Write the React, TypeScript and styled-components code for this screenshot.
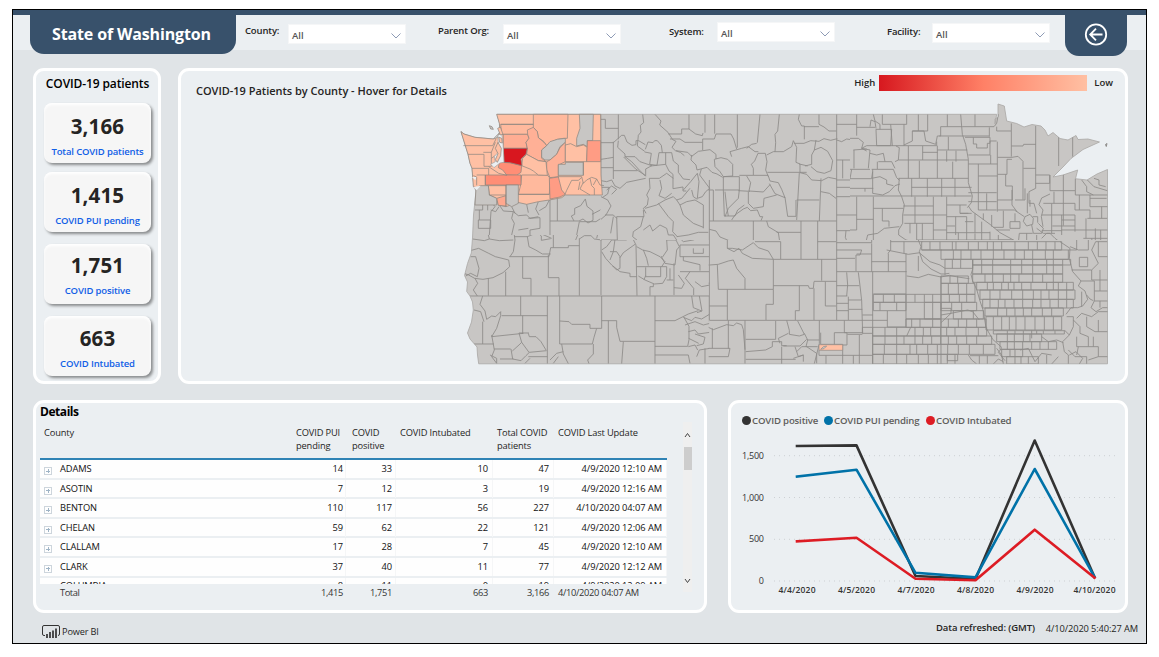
import React from "react";
import styled, { createGlobalStyle } from "styled-components";

const Global = createGlobalStyle`
  *, *::before, *::after { box-sizing: border-box; }
  body { margin: 0; background: #fff; font-family: "Open Sans", "Noto Sans", sans-serif; color: #252423; }
`;

const Page = styled.div`
  width: 1159px;
  height: 657px;
  padding: 9px 12px;
  overflow: hidden;
`;

const Frame = styled.main`
  width: 1135px;
  height: 635px;
  border: 1px solid #000;
  background: #e0e4e7;
`;

const Header = styled.header`
  height: 40px;
  display: flex;
  align-items: flex-start;
  padding-left: 17px;
  background: linear-gradient(#38516b 5px, #ebeff2 5px);
`;

const TitleTab = styled.h1`
  width: 206px;
  height: 44px;
  margin: 0;
  padding: 4px 3px 0 0;
  display: flex;
  align-items: center;
  justify-content: center;
  border-radius: 0 0 14px 14px;
  background: #38516b;
  color: #fff;
  font-size: 16px;
  font-weight: 700;
  letter-spacing: -0.15px;
`;

const BackTab = styled.button`
  width: 62px;
  height: 46px;
  margin: 0 0 0 15px;
  padding: 3px 0 0;
  border: 0;
  border-radius: 0 0 14px 14px;
  background: #38516b;
  display: flex;
  align-items: center;
  justify-content: center;
`;

const Filter = styled.label<{ $left: number; $top: number; $width: number; $labelTop: number }>`
  margin-left: ${(p) => p.$left}px;
  padding-top: ${(p) => p.$top}px;
  width: ${(p) => p.$width}px;
  display: flex;
  justify-content: space-between;
  align-items: flex-start;
  flex: none;
  > span {
    margin-top: ${(p) => p.$labelTop}px;
    font-size: 9.5px;
    line-height: 13px;
    font-weight: 600;
    letter-spacing: -0.15px;
    white-space: nowrap;
    color: #252423;
  }
`;

const Dropdown = styled.div`
  width: 118px;
  height: 20px;
  padding: 3px 4px 0 3px;
  border: 1px solid #f5f6f7;
  background: #fff;
  display: flex;
  justify-content: space-between;
  align-items: center;
  font-size: 9.5px;
  font-weight: 600;
  color: #555;
`;

const TopRow = styled.section`
  margin-top: 18px;
  padding-left: 20px;
  height: 316px;
  display: flex;
  gap: 17px;
`;

const BottomRow = styled.section`
  margin-top: 16px;
  padding-left: 20px;
  height: 213px;
  display: flex;
  gap: 21px;
`;

const Panel = styled.div<{ $width: number }>`
  width: ${(p) => p.$width}px;
  flex: none;
  border: 3px solid #fff;
  border-radius: 11px;
  background: #ebeff2;
`;

const StatsPanel = styled(Panel)`
  padding: 4px 7px 0 8px;
`;

const StatsTitle = styled.h2`
  margin: 0 0 11px 0;
  height: 17px;
  line-height: 17px;
  text-align: center;
  font-size: 12px;
  font-weight: 600;
  letter-spacing: -0.12px;
  white-space: nowrap;
  color: #000;
`;

const StatCard = styled.div<{ $gap: number; $top: number }>`
  width: 107px;
  height: 60px;
  margin-bottom: ${(p) => p.$gap}px;
  padding-top: ${(p) => p.$top}px;
  border-radius: 8px;
  background: #f6f6f6;
  box-shadow: 2px 2px 3px rgba(0, 0, 0, 0.42), inset 0 2px 3px #fff;
  text-align: center;
`;

const StatValue = styled.div`
  height: 30px;
  line-height: 28px;
  font-size: 20.5px;
  font-weight: 700;
  letter-spacing: 0.15px;
  color: #252423;
`;

const StatLabel = styled.div`
  height: 20px;
  line-height: 20px;
  font-size: 9.5px;
  font-weight: 600;
  white-space: nowrap;
  letter-spacing: -0.15px;
  color: #1160e6;
`;

const MapHeader = styled.div`
  height: 29px;
  padding: 4px 12px 0 15px;
  display: flex;
  align-items: flex-start;
  font-size: 9.5px;
  line-height: 16px;
  font-weight: 600;
`;

const MapTitle = styled.h2`
  margin: 8px auto 0 0;
  font-size: 11px;
  line-height: 16px;
  font-weight: 600;
  letter-spacing: -0.02px;
`;

const Scale = styled.div`
  width: 208px;
  height: 16px;
  margin: 0 7px 0 4px;
  background: linear-gradient(90deg, #d7181f, #ff8066 50%, #ffc0a3);
`;

const MapCanvas = styled.svg`
  display: block;
  margin-left: 275px;
`;

const DetailsPanel = styled(Panel)`
  display: flex;
  padding: 0 0 0 4px;
`;

const TableArea = styled.div`
  width: 627px;
`;

const DetailsTitle = styled.h2`
  margin: 0;
  height: 19px;
  line-height: 17px;
  font-size: 12px;
  font-weight: 700;
  letter-spacing: -0.45px;
  color: #000;
`;

const COLS = "252px 54px 50px 97px 61px 113px";

const HeadRow = styled.div`
  height: 37px;
  display: grid;
  grid-template-columns: ${COLS};
  font-size: 9.3px;
  line-height: 13px;
  letter-spacing: -0.15px;
  padding-top: 4px;
  > span { padding-left: 4px; white-space: pre; }
  > span:nth-child(3) { padding-left: 6px; }
`;

const Rows = styled.div`
  height: 124px;
  overflow: hidden;
`;

const NameCell = styled.span<{ $indent: number }>`
  display: flex;
  align-items: center;
  gap: 8px;
  padding-left: ${(p) => p.$indent}px;
  letter-spacing: -0.1px;
`;

const Row = styled.div`
  height: 17.6px;
  margin-bottom: 2px;
  display: grid;
  grid-template-columns: ${COLS};
  background: #fefefe;
  font-size: 9.3px;
  line-height: 18px;
  color: #111;
  ${Rows} > &:last-child { line-height: 16px; }
`;

const Cell = styled.span<{ $inset: number; $start?: boolean }>`
  text-align: ${(p) => (p.$start ? "left" : "right")};
  padding: 0 ${(p) => p.$inset}px;
  border-right: 1px solid #f5f6f7;
  letter-spacing: -0.06px;
  white-space: nowrap;
`;

const Expander = styled.i`
  width: 8px;
  height: 8px;
  margin-top: 4px;
  border: 1px solid #cdd5dc;
  background:
    linear-gradient(#9fb4c6, #9fb4c6) center / 4px 1px no-repeat,
    linear-gradient(#9fb4c6, #9fb4c6) center / 1px 4px no-repeat;
`;

const Rule = styled.div`
  height: 2px;
  margin-top: -1px;
  background: #2f83b5;
`;

const TotalRow = styled(Row)`
  background: none;
  color: #333;
  ${Cell} { border-color: transparent; letter-spacing: -0.33px; }
  ${NameCell} { letter-spacing: -0.45px; }
`;

const Scroller = styled.div`
  width: 9px;
  height: 170px;
  margin: 19px 0 0 16px;
  background: #efefef;
  display: flex;
  flex-direction: column;
  align-items: center;
`;

const Thumb = styled.div`
  width: 8px;
  height: 23px;
  margin: 6px 0 auto;
  background: #cdcdcd;
`;

const ChartPanel = styled(Panel)`
  padding: 9px 0 0 11px;
`;

const Legend = styled.div`
  display: flex;
  height: 17px;
  padding-bottom: 1px;
  align-items: center;
  font-size: 9.6px;
  font-weight: 600;
  color: #605e5c;
`;

const Dot = styled.i<{ $color: string }>`
  width: 9px;
  height: 9px;
  margin-right: 1px;
  border-radius: 50%;
  background: ${(p) => p.$color};
`;

const LegendItem = styled.span<{ $width: number }>`
  width: ${(p) => p.$width}px;
  display: flex;
  align-items: center;
  white-space: nowrap;
  letter-spacing: -0.16px;
`;

const ChartCanvas = styled.svg`
  display: block;
  margin-left: -11px;
`;

const Footer = styled.footer`
  height: 30px;
  padding: 0 8px 0 29px;
  display: flex;
  align-items: center;
  font-size: 9.3px;
  letter-spacing: -0.12px;
  > svg { margin-top: 7px; }
`;

const Brand = styled.span`
  margin: 7px auto 0 2px;
  font-size: 9.2px;
  letter-spacing: -0.15px;
`;

const Refreshed = styled.b`
  font-weight: 600;
  font-size: 9.5px;
  margin: -2px 11px 0 0;
  letter-spacing: -0.1px;
`;

/* ---------- map data ---------- */

type Shape = [string, string];
const LIGHT = "#ffc0a4";
const LAND = "#c8c6c4";

const washington: Shape[] = [
  [LIGHT, "140,58 452,58 453,240 457,300 346,300 335,308 298,315 265,320 230,328 203,322 168,335 145,330 140,310 118,300 115,272 80,278 70,275 66,220 60,205 54,178 33,110 42,117 75,127 130,132 142,128 150,110 148,85"],
  ["#ffb99d", "152,88 250,88 257,98 233,118 155,118"],
  ["#ffad93", "160,118 233,118 237,130 228,142 232,160 160,160"],
  ["#ffb99d", "250,58 354,58 352,130 340,130 322,133 305,140 290,152 282,140 265,128 262,110 250,97"],
  ["#ffb096", "233,118 232,105 250,97 262,110 265,128 282,142 290,152 275,165 275,190 288,200 265,197 230,178 232,160 228,142 237,130"],
  [LAND, "275,165 290,152 300,140 322,133 346,130 346,142 330,155 320,178 300,195 285,195 275,187"],
  ["#ffb197", "290,200 300,195 320,178 330,158 346,142 346,200 325,210 325,245 300,248 290,225"],
  ["#ffb99d", "215,240 292,240 300,250 298,298 205,298 212,270"],
  [LIGHT, "230,178 265,197 288,200 292,241 265,240 250,228 240,222 215,212 218,190"],
  [LAND, "388,58 430,58 428,137 412,137 412,155 400,148 380,153 380,130 390,100"],
  [LIGHT, "346,150 362,146 380,155 400,150 412,157 410,200 346,200"],
  ["#ff9c84", "412,137 452,137 452,200 410,200"],
  [LAND, "346,202 400,202 400,241 325,241 325,208 346,208"],
  ["#ff9c84", "298,250 325,246 330,265 335,285 346,298 330,306 300,312"],
  ["#ff8e76", "148,202 180,203 215,212 213,232 200,241 170,240 158,225 145,218"],
  ["#ff8e76", "106,240 213,240 213,270 106,270"],
  ["#ffa88e", "140,310 168,302 168,333 145,331"],
  [LAND, "168,270 205,270 205,325 185,335 168,325"],
  [LAND, "78,280 90,272 115,272 118,300 140,310 140,330 75,330"],
  ["#d8171f", "160,160 232,160 228,178 213,192 216,212 180,203 162,202"],
];

const coasts = "M40 152h88 l10 -20 M54 178h48 v36 h22 v-42 h-24 M124 172l12 -30 M124 190l15 -10 M66 220h50 v20 M116 215l30 20 25 6 M80 240h26 v30 M70 242l10 4 0 25 M115 272h54 M168 270v65 M118 300h50 M400 241l0 -41 M325 245h70 l5 20 10 -10 15 -8 15 5 10 18 12 2 M395 248l-10 8 -20 0 -15 30 -5 12 M385 285l5 -25 M400 262l-10 20 30 18 M420 250l5 22 8 8 0 20 M440 252l-10 18 M152 88h98 M205 298h93";

const northOregon = "M75 290l20 0 15 10 0 15 -32 3 M78 318h20v27H75 M98 318l15 8 0 20 M85 375h37v25h-37z M88 345v30 M108 315l15 5 12 15 -12 15 -5 70 M122 345l15 5 10 -15 M150 333l10 15 30 2 15 12 25 -2 10 10 25 -5 M190 350l-5 20 8 15 -8 35 M185 335l10 20 M230 328l5 25 M265 320l-8 22 10 18 M298 315l-10 20 -20 12 M322 308v70 M235 370l35 -2 0 32 -30 5 0 15 M300 315v105 M300 378h72 M205 405l30 -5 M372 378l-8 -15 10 -5 0 -18 18 -8 14 -20 5 22 18 14 0 28 -15 8 -15 -12 -12 6 -15 0 M426 358l25 -13 12 -15 -8 -30 M380 420l8 -40 50 0 30 -20 -5 60";

const oregon = "M68 42l35 5 15 -5 30 5 42 -2 M118 42l-5 -20 15 -10 20 2 25 3 20 -5 M193 0v30l2 15 -5 35 -10 15 M193 35h40 M270 0v25l35 15 M310 0v68 M297 95l5 -27H355V62H388 M388 40V212 M232 35l5 30 20 10 20 12 25 0 M232 35l30 -12 12 10 0 13 28 -5 M64 76l22 -6 30 15 20 10 40 10 3 20 -20 18 -30 15 -30 5 -25 -3 -18 -10 -15 -5 M62 95l15 0 10 35 -5 25 -20 -10 -15 8 M75 160l8 15 -13 20 12 18 M115 160V212 M167 140V213 M178 95H297 M218 95v65h25v52 M295 90v68h32V213 M60 213H780 M380 0l-5 15 12 5 -10 25 M388 42l15 -10 20 0 10 10 22 3 M440 40l5 -20 15 -15 M453 45v165 M455 80l12 20 18 20 25 20 30 5 0 10h20 M490 0l8 20 -8 60 -10 25 M455 75l15 -10 15 -20 10 0 M480 80l20 0 10 15v35l-10 5 -12 -12 M495 45l35 0 15 -20 5 -25 M548 40l10 20 3 152 M510 98l10 -15 35 -25 M560 65l18 10 22 5 30 15 15 15 -10 15 M548 25l20 -20 20 8 30 -5 M615 0l10 20 25 10 0 15 28 0 10 20 -8 10 -5 45 -30 -5 -12 -22 M580 75l10 25 5 22 M560 125h90v30l-12 20 -25 2 -28 -12 -20 -12 M587 127v28l45 0V125 M610 177v8h-10v27 M587 152l-5 12 M650 45l2 30 -15 22 M672 115v95 M650 165h20 M660 130v35 M650 30l20 -10 30 30 30 -5 50 -20 M690 60h90 M690 60v35h90 M730 70v15h30v-15 M700 95v12l50 12v18 M690 140h90 M685 150l18 25 -8 15 -23 -2 M720 140l-14 20 25 30 0 20 M735 170l20 15 25 -5 M680 30l65 -15 20 -15 M212 213v59 M98 213l-8 25 15 20 5 25 15 -10 12 2 15 -15 0 12 -12 38 -15 25 95 -10 M98 290V357 M72 255l20 5 10 30 M155 272H292 M218 272v55 M292 213V416 M329 213V357H427l5 -20 8 -27h-20v-12h-55l-8 -8 -28 -2 M72 357h60 M125 330l8 45 -8 20 15 20 M132 372h50 M187 378l20 -18 8 -8 -8 -28 30 0 M235 325l3 10 20 0 15 15 15 25 M183 372l5 30 25 5 15 -15 10 -10 52 -5 M150 402l40 0 M120 390l20 10 0 15 M215 352l22 30 M235 395h57 M225 415l15 -15 M455 213v97h-15 M455 287h45l0 20 10 42H615 M475 287V416 M520 350l-5 66 M430 357l0 30 -17 18 4 11 M335 357l5 30 15 29 M300 405l20 -20 20 -5 M310 415l15 -20 M615 213V416 M615 287l60 0 40 -20 30 -10 M615 364h98l4 -20 0 -40 -15 -27 M615 390h100l5 25 M715 365l20 -5 8 15 M748 213l8 45 -15 5 M725 213l5 35 25 10 M700 277l25 10 10 -10 20 5 25 -15 M705 300l30 -10 25 10 20 -5 M715 320l20 -5 10 12 35 -5 M735 327l30 10 -5 20 -20 5 M740 395l8 -20 32 -5 M765 416v-46 M716 340l30 15 M778 213v77";

const montana = "M2 43V265 M3 58h13v27H55 M55 43v75 M3 128h37 M40 125v112 M40 212h72 M3 178l20 -3 17 -3 M3 203h37 M40 128l25 -22 8 0 8 20 15 10 12 -2 0 -12 8 0 20 12 M128 43l3 25 -10 8 2 20 -8 10 -3 32 22 16 M55 122l-2 20 22 20 0 8 30 0 15 15 35 12 -18 10 0 20 -30 -20 -18 -18 -18 -18 M75 170l20 15 20 22 22 22 M134 156l20 4 -5 33 22 3 6 -38h38 M136 148l8 -22 15 2 5 -6 8 0 12 14 3 22 M165 43l18 20 -4 12 25 22 14 22 10 5 -12 18 10 10 15 5 12 10 M205 102h40v-15h22l20 15 20 5 2 -8 M210 117h30l15 10h52 M267 43v44 M315 43v55 M344 43v58 M308 150v-33h35l5 -15h45l8 15 9 30 M412 43v100 M228 152l35 5 12 12 20 -15 35 -5 18 14 0 14 M275 165l-2 15 15 15 3 15 30 -8 15 15 15 5 17 10 M197 158v35l10 20 12 10v43l30 -5 0 12 10 0 M215 158l5 25 15 12 0 22 15 20 20 2 M197 193l-45 5 M148 235l2 30 -10 20 5 10 -3 20 -12 10 8 15 M137 235L80 247 60 265 45 258 35 240 20 245 3 242 M20 270l15 -12 15 10 -15 15 M3 262l25 0 -5 20 -15 10 M3 290l20 10 10 18 -15 27 -15 13 M50 350h82l-2 -20 M50 350l2 70H3 M15 345l25 0 10 10 M40 350l-8 50 M130 350l-8 30 -22 15 -2 15 25 20 0 20 M150 375l-20 15 M150 375l8 18 22 -18 20 10 5 20 15 0 10 15 M148 235h30l22 -15 20 15 M180 240l5 25 -8 22 18 8 20 -15 M175 310l30 40 15 15 -2 30 14 15 M135 325l35 -10 25 -15 25 -10 10 10 15 -5 25 -30 M275 270l5 20 12 8 M240 315l-10 -15 M240 315l10 30 30 25 30 12 M240 315l20 -10 25 -5 25 15V385 M250 270l22 -25 20 -25 5 25 -5 50 15 -5 10 -15 12 -10 -15 -20 -15 -20 5 -18 M230 410l35 -5 30 -8 30 0 M328 240v210 M325 270h15V363 M345 270h25l3 78h32l8 -18 20 -15 M370 230h48v40h-48z M343 178l20 -5 20 5 15 15 0 35 -28 2 -10 -15 -15 -15z M395 170l-5 -15 35 -10 20 -5 20 15 10 0 M418 226h87 M460 225l0 -20 -6 -12 10 -10 10 -23 22 0 5 25 -4 25 8 20 M440 145l15 -12 15 -3 M480 43l-8 85 M538 43l-5 50 -8 10 2 25 -2 28 M500 165l20 -10 30 0 25 -15 5 -18 M580 122l10 20 -2 45 12 5 0 25 M502 217H620 M598 43l-3 15 10 20 8 0v40 M582 130h30l20 -8 25 2 15 -8 20 5 20 -5 M612 80h45 M657 43v30l15 8 15 12 22 0 M648 120l-5 30 -8 15 0 28 -20 5 M643 150l20 -8 20 12 15 28 -5 30 -20 8 -22 -5 -18 -15 M598 192l25 6 M600 218l20 5 15 17 30 2 20 -10 25 5 M328 363H710 M375 275l5 45 5 28 M418 270l-3 25 -30 30 -10 25 M415 272l35 2 M440 228l12 20 -5 25 43 3 20 -22 M395 360l10 -15 25 -18 12 -5 10 10 20 -2 8 20 8 0 -5 12 M460 325l30 -5 2 -25 38 -10 M445 275l0 35 15 15 M505 228l5 15 25 5 10 20 10 25 -30 -12 -17 -30 M555 292l8 57h25V300 M598 218l-8 142 M590 300h68 M663 235l-5 128 M663 275l25 5 20 15 M460 363v62h-28 M500 363l5 17 30 18 8 52 M462 428h80 M530 397h73 M603 363v87 M653 363v87 M653 425h57 M328 388l20 5 12 18 30 12 15 15 15 12 M710 43v407 M710 73h60 M710 120l15 5 15 -8 20 3 20 -5 M710 180h60 M728 180v55 M753 180v55h27 M710 240h40 M710 262h40 M710 290h40 M710 345h60 M710 392h60 M738 392l-2 20 6 15 M710 425h40";

const plains = "M20 43v64 M0 73h20 M0 115l25 0 15 12 -5 18 15 8 M20 82h55 M60 80l3 -20 12 5 3 20 M70 43l5 20 15 10 0 15 M97 43v30h73V43 M78 88l2 49h42l3 -49H78 M122 73l5 65 M205 43v50h-18v30l-25 12 M233 43v50h-28 M162 73v65 M187 93h35l5 30 30 10 5 -25h10v-28h65 M292 43v37 M50 137h210v-12 M332 43l5 60 10 30 8 45 0 70 12 40 -3 20 -12 15 M375 43v37 M337 80h95l8 -10 5 -27 M418 82v28 M268 108h150 M295 110v40 M345 112h75 M370 112v20h10v12h32v-14h8v-18 M355 165h65v-42h20 M422 165v27 M440 80v13h43 M442 125v210 M355 192h87 M385 192v138 M385 228h57 M484 70v100 M484 138l35 0 2 -5 37 0 M557 78V265 M626 108v90 M668 107v63 M443 172h43l18 -3 15 15v115 M486 178h-15v45h-28 M520 205h37 M467 223v35h20v42h-45 M557 225h42v25h-42 M600 225v47 M600 272h75 M640 222v155 M676 236v49h97 M612 275v35 M600 282l-25 12 -8 20 12 16 -5 20 5 30 M580 310h25v90 M605 310h70v20 M688 285v45 M720 285v35 M575 345h100 M635 345v60 M675 330h45v25 M635 360h40 M712 355h60 M708 355v60 M755 320v35 M720 320h53 M607 378h68 M675 345v50 M575 392h60 M635 390h138 M736 385v35 M752 390v60 M725 415l5 35 M700 415h73 M695 240l15 20 0 15 20 10 M712 240l20 20 40 12 M732 235l15 5 0 15 20 5 M720 295h50 M486 270v45l15 20 M495 300h30v-35 M540 300v20 M532 280v60 M557 265l-20 10 0 35 15 0 8 30 M355 278h85 M355 305h85 M410 280v50 M330 340h35 M385 330h55 M443 330h50l30 20 M525 350l15 -7 10 12 -2 18 -18 5 -10 -14z M480 365h30v20h-30z M548 350h15v18 M545 375l5 25 25 0 5 -15 -15 -15 M355 318l10 15 55 40 30 25 55 30 3 -28 40 0 M400 340v20 M425 345v35 M460 332v50h-30 M495 340v25 M480 390h-40 M530 400v50 M560 405v45 M560 385l20 15 20 0 15 15 20 15 15 15 M575 415l15 -15 25 0 M138 138l10 5 -3 37 -10 5 M175 138v97 M218 138v42 M218 157h45 M262 137v98 M262 150h90 M290 152v33 M318 152v33 M145 180h210 M208 182v52 M308 185v50 M0 208h60 M5 208l-5 28h65 M10 150l40 -3 M12 150v55 M50 137l-15 8 25 5 -5 55 M60 160l20 5 20 -5 5 25 20 0 10 20 M85 185h20 M82 185v22 M65 208h65l10 25 8 8 M68 215l-3 20 25 -5 20 10 0 12 20 5 M0 265h45v10 M68 208v72 M45 265h25 M0 288H365 M145 235h210 M185 235v55 M232 235v55 M275 235v55 M315 235v55 M185 262h180 M68 280l30 5 20 -10 17 -18 15 -5 M148 235l-3 35 10 20 8 25 -5 30 0 25 -12 20 0 15 22 15 20 5 20 15 15 20 M70 290v160 M70 325h90 M97 325v38h20v17 M20 290v100H0 M0 345h20 M20 358h50 M48 425l5 -20 30 -5 20 -15 45 -5 M195 290v80 M160 318h90 M250 290v130 M290 290v130 M160 345h130 M163 370h87 M180 370v30 M200 370v50 M217 370v50 M290 315h60 M330 315v25h25 M290 350h60 M317 350v55 M350 350v75 M250 390h40 M290 398h130 M290 378h25 M325 398v27 M375 340v58 M345 365h25 M395 365v33 M200 420h290 M375 400v20 M395 398v22 M420 395v25 M445 405v15h40";

const rockies = "M28 0v240 M82 0v25l20 10 15 -10 10 15 30 15 63 3 M82 25l15 0 30 5 33 -22 15 15 30 10 15 25 M165 5h77v52 M303 0v57 M220 58h190 M353 0v58 M353 5h55 M365 58v64 M410 0v240 M342 124h68 M30 75l25 -2 30 -10 15 -3 10 25 25 30v33 M52 75l3 73 M55 148h165V58 M220 137h105l3 8 12 0 2 -20 M376 125v73h32 M298 137v75h-12v28 M342 145v95 M82 148v92 M28 198h54 M220 148v45h-22v47 M28 241h534 M410 30h75l-5 15h-12v48 M410 55h55 M410 95h210 M410 8h105V0 M515 10v85 M470 42h45 M515 65h103 M518 95v277 M565 40v55 M618 40v122H520 M440 97l3 38 -3 33 M475 97l5 40 5 45 3 98 M410 137h68 M410 168h32 M445 170v70 M410 190h35 M410 212h35 M445 180h40 M447 208h40 M487 225h32 M572 0v30l-8 10 M572 5h40v35 M560 30l25 5 40 8 35 -5 M612 5h55 M655 0l8 20 -5 15 10 30 25 22 30 15 10 0 15 -2 M660 40l30 25 30 10 15 10 0 20 M620 108l35 5 30 -10 38 8 25 -5 25 5 35 5 M655 48v45 M665 30h60 M618 162v100 M723 108v264 M562 213v48h56 M618 237h105 M487 262h31 M0 262l15 -5 25 12 40 -15 20 3 10 -8 15 5 5 15 5 60 M37 265v60 M85 241v85 M135 241v130 M10 325h80l-5 25 -65 0 0 22 M0 270l10 10 5 30 -15 5 M0 320l15 5 0 25 M137 298h90v-55 M137 335l60 -5 20 -10 0 -15 28 0 0 12 15 0 M260 241l8 30 0 12 30 5 15 -5 -20 -40 M240 310l-5 -15 30 -15 M245 320v52 M137 358h150 M285 320l10 30 15 -5 0 20 M290 335l15 -15 15 0 30 20 0 30 M250 318h50l20 -20 M313 280l10 20 35 0 M323 300l-5 20 35 0 M358 241v70l-15 60 M310 345l-30 10 M362 278v35h66v59 M403 278h38v37h-38z M433 241v37h55 M478 285v87 M442 283h45 M487 262v18h30 M357 331v15h21v26 M378 346h140 M460 346v26 M0 75h28 M0 125l28 5 M723 205l30 0 0 15 -30 5 M723 248l30 -28 50 -10 15 5 20 25 M620 288l12 -26";

const eastBorders = "M818 58l0 30 -5 15 5 20 12 25 10 35 10 30 8 50 20 35 28 25 M1080 5l30 20 -2 30 10 40 25 28 -8 15 20 15 8 25 -15 20 -15 5 -20 0 -15 20 M1105 30h25V0 M1110 20l25 10 30 0 0 -30 M1138 52h25v28h-25z M1115 90l60 0 20 -20 -10 -20 -10 -20 12 -25 35 0 M1195 5v45l28 0 M1175 90v30h48 M1143 123h40v30h40 M1200 90v63 M1183 153v30h40 M1160 165l10 12 10 5 M1145 155v45 M1093 270l15 15 -20 20 5 30 12 10 0 27 M1100 230l20 0 0 30 -12 25 M1120 240l20 20 0 20 25 10 M1130 235l15 -15 30 10 20 -15 30 0 M1160 230v30l25 15 38 0 M1165 290v30l30 0 0 30 28 0 M1195 240v35 M1130 290v30l35 0 M1105 330l20 20 35 0 0 22 M1130 345l5 -25 M1180 320v-30 M1195 350l-30 10 M1108 345l20 -10 20 20 -10 17 M1183 183l-10 20 15 12 20 -12 15 0 M1200 183v20 M960 330l25 -5 20 40 20 -25 30 5 M995 270v25 M1025 290l20 15 25 -5 20 8 M890 325l15 20 5 27 M880 372l15 -15 15 8 M805 345l10 15 15 12 M905 325l-10 12 20 25 M765 343v29 M810 347h85 M838 347v25 M862 347v25 M1040 345v27 M1075 350l-20 22";

type Band = [number, number, number[]];
const countyBands: Band[] = [
  [5, 30, [665, 690, 720, 757, 768, 805, 835, 862, 880, 905, 945, 985, 1012, 1038, 1065, 1085]],
  [30, 58, [723, 760, 783, 813, 843, 880, 912, 945, 973, 998, 1036, 1060, 1105]],
  [58, 85, [735, 757, 782, 818]],
  [58, 75, [818, 845, 878, 932, 965, 998, 1040, 1060, 1088, 1112]],
  [75, 102, [818, 845, 878, 932, 965, 998, 1040, 1060, 1088]],
  [102, 127, [818, 855, 878, 910, 932, 957, 998, 1028, 1060, 1088]],
  [127, 150, [830, 862, 880, 905, 925, 942, 965, 993, 1040, 1060, 1075, 1100, 1120]],
  [150, 178, [840, 870, 900, 935, 968, 1000, 1023, 1047, 1075, 1100, 1125]],
  [178, 204, [848, 870, 895, 915, 942, 968, 998, 1023, 1050, 1075, 1100, 1120]],
  [204, 228, [855, 893, 920, 945, 970, 995, 1027, 1055, 1090]],
  [230, 270, [858, 880, 905, 928, 948, 975, 1005, 1033, 1060, 1085]],
  [163, 187, [520, 550, 583, 618, 645, 673, 698, 723, 748, 778, 800, 825]],
  [187, 212, [520, 540, 590, 618]],
  [187, 237, [673, 698, 723]],
  [187, 212, [723, 755, 785, 830]],
  [212, 237, [760, 785, 820, 850]],
  [130, 163, [723, 745, 775, 800, 825]],
  [108, 130, [723, 750, 773, 805]],
  [237, 262, [618, 635, 660, 698, 723, 745, 775, 800, 830, 858]],
  [262, 288, [518, 555, 590, 645, 670, 692, 722, 740, 765, 798, 835, 860]],
  [288, 313, [518, 555, 590, 612, 645, 668, 695, 722, 745, 770, 800, 830, 875]],
  [313, 343, [518, 553, 590, 630, 650, 683, 712, 743, 775, 808, 850, 885]],
  [343, 372, [518, 550, 590, 620, 655, 685, 712, 742]],
  [343, 362, [742, 773]],
  [272, 282, [880, 922, 945, 970, 1010, 1030, 1065, 1093]],
  [282, 305, [890, 922, 943, 970, 990, 1025]],
  [305, 328, [900, 922, 943, 968, 995, 1020, 1045, 1070]],
  [328, 350, [905, 930, 945, 968]],
  [350, 372, [920, 945, 963, 985, 1015]],
];

const bandPath = countyBands
  .map(([top, bottom, xs]) => {
    const last = xs[xs.length - 1];
    return `M${xs[0]} ${top}H${last} M${xs[0]} ${bottom}H${last}` + xs.map((x) => `M${x} ${top}V${bottom}`).join("");
  })
  .join("");

/* Each sheet keeps its own local origin, three units per pixel, and is trimmed where the next one starts. */
const sheets: { id: string; x: number; y: number; trim: string; d: string }[] = [
  { id: "nw", x: 450, y: 95, trim: "M0 0H451V420H0Z", d: northOregon },
  { id: "sw", x: 450, y: 225, trim: "M0 30H450V45H778V420H0Z", d: oregon },
  { id: "mt", x: 600, y: 100, trim: "M0 0H750V420H0Z", d: montana },
  { id: "ne", x: 850, y: 100, trim: "M0 0H780V420H0Z", d: plains },
  { id: "se", x: 700, y: 240, trim: "M26 0H1230V380H26Z", d: rockies + eastBorders + bandPath },
];

const LANDMASS =
  "M497 114.3H996.7L995 124V119L998 117V104L1004.3 106 1006.7 121 1016.7 123.5 1024 127 1032 124.5 1041 126 1045 130 1048 136 1053 132.5 1060 138.5 1068 140 1076 135.5 1078 139.5 1088 139 1099.5 142 1083 149.5 1071 158.5 1063 167 1053 177 1063 175 1077.7 170 1075.5 178.7 1087 180 1097 174 1107.5 169.5V363.8H478.7L477.5 355 477 347 470 339 467.5 333 471.5 322 473.3 310 472.5 302 470 296 466.7 291.5 467.5 282 464.5 275.5 467.5 263.5 471.3 253 472.5 238 473.5 215 476 191 474 187 472 168 470 163 468 154 461 131.5 464 134 475 137.3 493 139 500 132 499.5 123Z";

function CountyMap() {
  return (
    <MapCanvas width="656" height="268" viewBox="456 100 656 268" fill="none" strokeLinejoin="round">
      <path d={LANDMASS} fill={LAND} stroke="#a9a7a5" strokeWidth=".8" />
      <clipPath id="land">
        <path d={LANDMASS} />
      </clipPath>
      <g clipPath="url(#land)">
        {sheets.map((s) => (
          <g key={s.id} transform={`translate(${s.x} ${s.y}) scale(.33333)`}>
            <clipPath id={s.id}>
              <path d={s.trim} />
            </clipPath>
            <path d={s.d} stroke="#8d8b89" strokeWidth="2.6" clipPath={`url(#${s.id})`} />
          </g>
        ))}
      </g>
      <g transform="translate(450 95) scale(.33333)" stroke="#8d8680" strokeWidth="2.2">
        {washington.map(([fill, points]) => (
          <polygon key={points} points={points} fill={fill} />
        ))}
        <path d={coasts} />
        <path d="M143 122l12 -8 4 30 3 58 -12 2 -18 14 -10 -10 14 -8 -3 -16 14 -14z" fill="#ebeff2" stroke="#a59d98" strokeWidth="2" />
        <path d="M143 100l8 -4 8 22 -8 2z M146 126l9 4 2 14 -8 -2z M136 160l8 -18 10 18 -2 22 -10 20 -6 -8 8 -18z" fill={LIGHT} />
        <path d="M118 92l8 3 4 8 -8 -1z" fill={LAND} />
        <path d="M66 246h13l-3 10z M70 276l22 -4 -12 14z" fill="#ebeff2" stroke="none" />
      </g>
      <g transform="translate(700 240) scale(.33333)">
        <path d="M357 314h71v17h-71z" fill={LIGHT} stroke="#8d8b89" strokeWidth="2" />
        <path d="M362 328l8 -8 10 -2 -8 8z" fill={LAND} stroke="#8d8b89" strokeWidth="2" />
      </g>
      <path d="M1107 143.5l-1.500 1 .8 2z" fill={LAND} stroke="#8d8b89" />
    </MapCanvas>
  );
}

/* ---------- page data ---------- */

const stats = [
  { value: "3,166", label: "Total COVID patients", gap: 9, top: 9 },
  { value: "1,415", label: "COVID PUI pending", gap: 12, top: 9 },
  { value: "1,751", label: "COVID positive", gap: 12, top: 7 },
  { value: "663", label: "COVID Intubated", gap: 0, top: 8 },
];

const filters = [
  { name: "County:", left: 9, top: 14, width: 161, labelTop: 0 },
  { name: "Parent Org:", left: 32, top: 14, width: 183, labelTop: 0 },
  { name: "System:", left: 48, top: 12, width: 166, labelTop: 3 },
  { name: "Facility:", left: 52, top: 13, width: 163, labelTop: 2 },
];

const rows = [
  ["ADAMS", "14", "33", "10", "47", "4/9/2020 12:10 AM"],
  ["ASOTIN", "7", "12", "3", "19", "4/9/2020 12:16 AM"],
  ["BENTON", "110", "117", "56", "227", "4/10/2020 04:07 AM"],
  ["CHELAN", "59", "62", "22", "121", "4/9/2020 12:06 AM"],
  ["CLALLAM", "17", "28", "7", "45", "4/9/2020 12:10 AM"],
  ["CLARK", "37", "40", "11", "77", "4/9/2020 12:12 AM"],
  ["COLUMBIA", "8", "11", "0", "19", "4/9/2020 12:09 AM"],
];
const totals = ["1,415", "1,751", "663", "3,166", "4/10/2020 04:07 AM"];
const insets = [2, 3, 4, 4, 4];

const days: [string, number][] = [
  ["4/4/2020", 797], ["4/5/2020", 856.5], ["4/7/2020", 916], ["4/8/2020", 975.5], ["4/9/2020", 1035], ["4/10/2020", 1094.5],
];
const ticks: [string, number, number][] = [["1,500", 455.7, 22], ["1,000", 497.5, 22], ["500", 539.3, 15], ["0", 581, 5]];
const series = [
  { color: "#333333", points: "797,446 856.5,445.4 915.5,576 975.5,579 1034.7,440.5 1094.5,577" },
  { color: "#0072a8", points: "797,476.6 856.5,469.7 915.5,572.8 975.5,577.4 1034.7,469 1094.5,577" },
  { color: "#dd1c24", points: "797,541.3 856.5,537.8 915.5,578.7 975.5,580.3 1034.7,529.7 1094.5,577.7" },
];

export default function App() {
  return (
    <Page>
      <Global />
      <Frame>
        <Header>
          <TitleTab>State of Washington</TitleTab>
          {filters.map((f) => (
            <Filter key={f.name} $left={f.left} $top={f.top} $width={f.width} $labelTop={f.labelTop}>
              <span>{f.name}</span>
              <Dropdown>
                All
                <svg width="10" height="6" viewBox="0 0 10 6" fill="none" stroke="#8e9bb5">
                  <path d="M.5 .5 5 5 9.500 .5" />
                </svg>
              </Dropdown>
            </Filter>
          ))}
          <BackTab aria-label="Back">
            <svg width="24" height="24" viewBox="0 0 24 24" fill="none" stroke="#fff" strokeWidth="1.8">
              <circle cx="12" cy="11.500" r="10.200" />
              <path d="M18.500 11.500H6.500M12 5.700 6.200 11.500 12 17.300" />
            </svg>
          </BackTab>
        </Header>

        <TopRow>
          <StatsPanel $width={128}>
            <StatsTitle>COVID-19 patients</StatsTitle>
            {stats.map((s) => (
              <StatCard key={s.label} $gap={s.gap} $top={s.top}>
                <StatValue>{s.value}</StatValue>
                <StatLabel>{s.label}</StatLabel>
              </StatCard>
            ))}
          </StatsPanel>
          <Panel $width={950}>
            <MapHeader>
              <MapTitle>COVID-19 Patients by County - Hover for Details</MapTitle>
              High
              <Scale />
              Low
            </MapHeader>
            <CountyMap />
          </Panel>
        </TopRow>

        <BottomRow>
          <DetailsPanel $width={674}>
            <TableArea>
              <DetailsTitle>Details</DetailsTitle>
              <HeadRow>
                <span>County</span>
                <span>{"COVID PUI\npending"}</span>
                <span>{"COVID\npositive"}</span>
                <span>COVID Intubated</span>
                <span>{"Total COVID\npatients"}</span>
                <span>COVID Last Update</span>
              </HeadRow>
              <Rule />
              <Rows>
                {rows.map(([name, ...cells]) => (
                  <Row key={name}>
                    <NameCell $indent={4}><Expander />{name}</NameCell>
                    {cells.map((c, i) => <Cell key={i} $inset={insets[i]}>{c}</Cell>)}
                  </Row>
                ))}
              </Rows>
              <TotalRow>
                <NameCell $indent={20}>Total</NameCell>
                {totals.map((c, i) => <Cell key={c} $inset={insets[i]} $start={i === 4}>{c}</Cell>)}
              </TotalRow>
            </TableArea>
            <Scroller>
              <svg width="9" height="19" fill="none" stroke="#444"><path d="M2 15l2.500 -3.500L7 15" /></svg>
              <Thumb />
              <svg width="9" height="19" fill="none" stroke="#444"><path d="M2 6l2.500 3.500L7 6" /></svg>
            </Scroller>
          </DetailsPanel>

          <ChartPanel $width={400}>
            <Legend>
              <LegendItem $width={82}><Dot $color="#333" />COVID positive</LegendItem>
              <LegendItem $width={102}><Dot $color="#0072a8" />COVID PUI pending</LegendItem>
              <LegendItem $width={90}><Dot $color="#dd1c24" />COVID Intubated</LegendItem>
            </Legend>
            <ChartCanvas width="394" height="180" viewBox="731 429 394 180">
              {ticks.map(([label, y, w]) => (
                <g key={label}>
                  <path d={`M774 ${y}H1115`} stroke="#cdd0d3" strokeDasharray="1 4" />
                  <text x="764" y={y + 3} textAnchor="end" textLength={w} fontSize="9" fill="#333">{label}</text>
                </g>
              ))}
              {days.map(([label, x]) => (
                <text key={label} x={x} y="593" textAnchor="middle" textLength={label.length > 8 ? 42 : 37} fontSize="8.500" fontWeight="600" fill="#333">{label}</text>
              ))}
              {series.map((s) => (
                <polyline key={s.color} points={s.points} fill="none" stroke={s.color} strokeWidth="2.600" strokeLinecap="square" strokeLinejoin="round" />
              ))}
            </ChartCanvas>
          </ChartPanel>
        </BottomRow>

        <Footer>
          <svg width="18" height="14" viewBox="0 0 18 14" fill="none" stroke="#333">
            <path d="M3 10.500H2A1.500 1.500 0 0 1 .5 9V2A1.500 1.500 0 0 1 2 .5H16A1.500 1.500 0 0 1 17.500 2V9A1.500 1.500 0 0 1 16 10.500" />
            <path d="M5 9v4M8 7v6M11 5.500V13M14 3.500V13" strokeWidth="1.700" />
          </svg>
          <Brand>Power BI</Brand>
          <Refreshed>Data refreshed: (GMT)</Refreshed>
          <span>4/10/2020 5:40:27 AM</span>
        </Footer>
      </Frame>
    </Page>
  );
}
